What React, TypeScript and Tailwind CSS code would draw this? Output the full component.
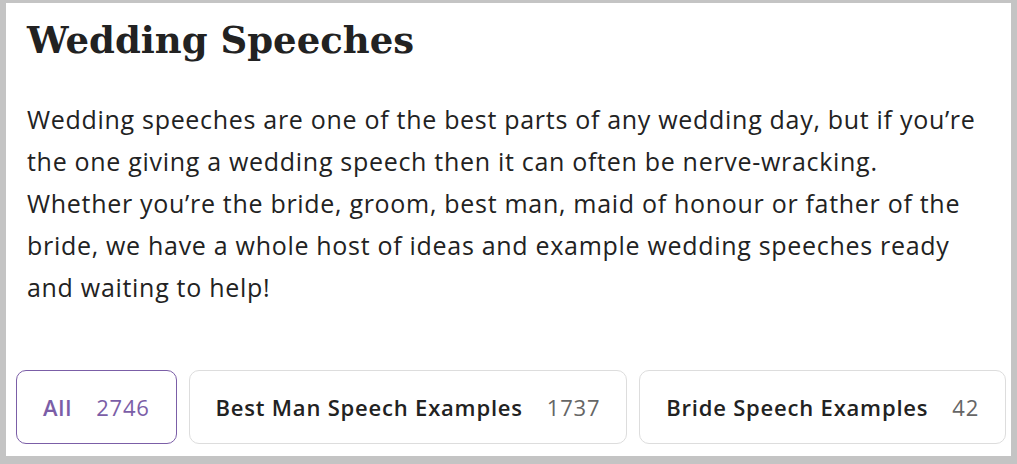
import React from 'react';

const tabs = [
    { label: 'All', count: 2746, active: true },
    { label: 'Best Man Speech Examples', count: 1737 },
    { label: 'Bride Speech Examples', count: 42 },
];

const intro = [
    'Wedding speeches are one of the best parts of any wedding day, but if you’re',
    'the one giving a wedding speech then it can often be nerve-wracking.',
    'Whether you’re the bride, groom, best man, maid of honour or father of the',
    'bride, we have a whole host of ideas and example wedding speeches ready',
    'and waiting to help!',
];

export default function App() {
    return (
        <div className="h-[464px] w-[1017px] overflow-hidden border-[#c4c4c4] border-t-[3px] border-l-[6px] border-r-[6px] border-b-[8px] bg-white">
            <div className="flex h-full flex-col pl-[10px] pr-[5px]">
                <h1
                    className="mt-[13px] pl-[11px] text-[37px] font-bold leading-[48px] text-[#222]"
                    style={{ fontFamily: '"DejaVu Serif", serif' }}
                >
                    Wedding Speeches
                </h1>
                <p
                    className="mt-[34px] pl-[11px] text-[25px] leading-[42px] tracking-[0.7px] text-[#222]"
                    style={{ fontFamily: '"Open Sans", sans-serif' }}
                >
                    {intro.map(line => (
                        <span key={line} className="block whitespace-nowrap">{line}</span>
                    ))}
                </p>
                <div className="mt-auto mb-[12px] flex gap-3" style={{ fontFamily: '"Open Sans", sans-serif' }}>
                    {tabs.map(tab => (
                        <Tab key={tab.label} {...tab} />
                    ))}
                </div>
            </div>
        </div>
    );
}

function Tab({ label, count, active }: { label: string, count: number, active?: boolean }) {
    return (
        <button
            className={
                'flex h-[74px] flex-auto items-center justify-center gap-[24px] rounded-[10px] border bg-white px-[24px] text-[22px] tracking-[0.8px] ' +
                (active ? 'border-[#7b5ea7]' : 'border-[#dddddd]')
            }
        >
            <span className={active ? 'font-semibold text-[#7b5ea7]' : 'font-semibold text-[#222]'}>{label}</span>
            <span className={active ? 'text-[#7b5ea7]' : 'text-[#666]'}>{count}</span>
        </button>
    );
}
